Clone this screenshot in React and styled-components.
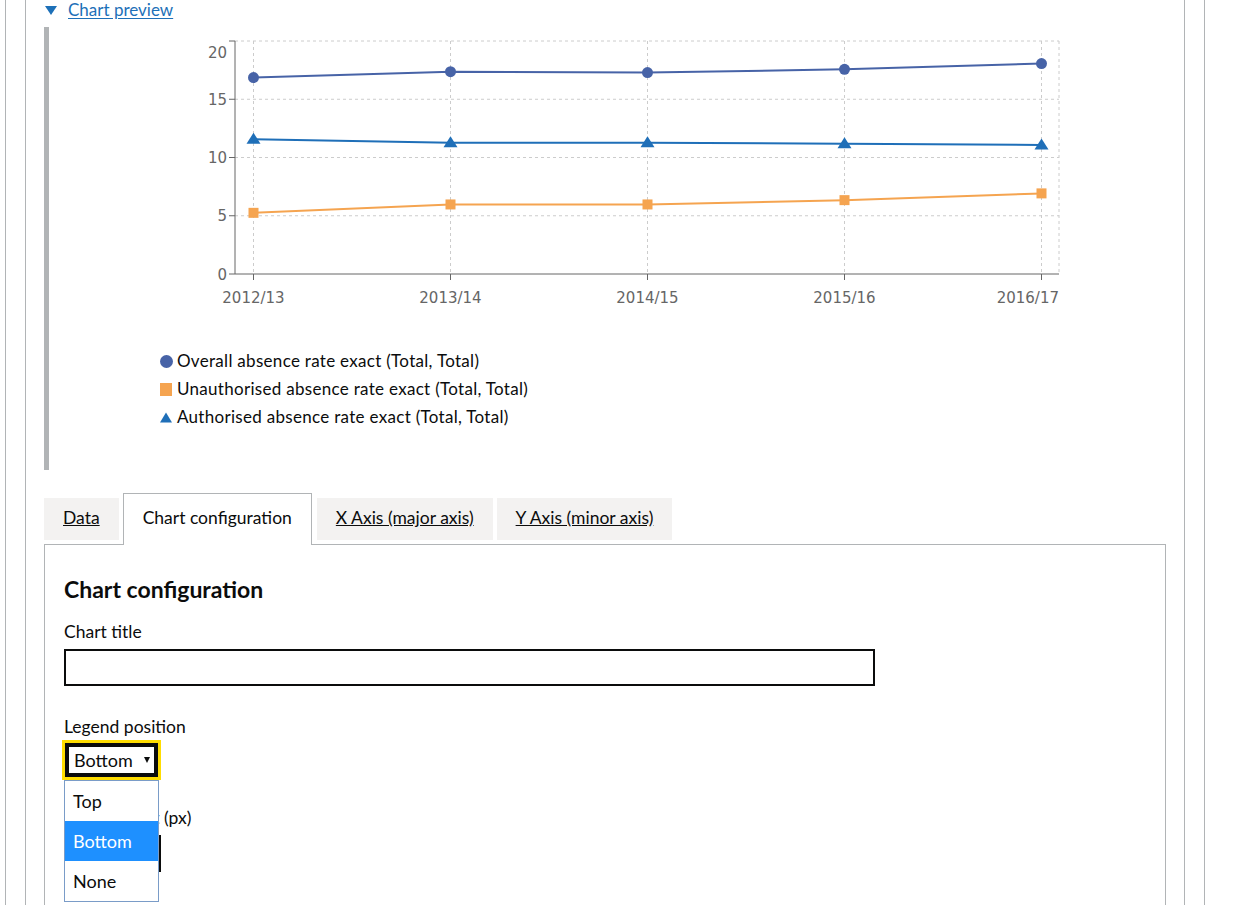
import styled, { createGlobalStyle } from 'styled-components';

const GlobalStyle = createGlobalStyle`
	body {
		margin: 0;
		background: #fff;
		color: #0b0c0c;
		font-family: Lato, 'Liberation Sans', sans-serif;
	}
`;

const years = ['2012/13', '2013/14', '2014/15', '2015/16', '2016/17'];

const series = [
	{ key: 'overall', label: 'Overall absence rate exact (Total, Total)', color: '#4763a7', shape: 'circle', values: [16.86, 17.37, 17.29, 17.57, 18.06] },
	{ key: 'unauthorised', label: 'Unauthorised absence rate exact (Total, Total)', color: '#f5a450', shape: 'square', values: [5.25, 5.97, 5.97, 6.34, 6.92] },
	{ key: 'authorised', label: 'Authorised absence rate exact (Total, Total)', color: '#1f6fb8', shape: 'triangle', values: [11.57, 11.27, 11.27, 11.19, 11.08] },
];

// plot box in page pixels (svg viewBox is offset to match)
const plot = { left: 235, right: 1059, top: 41, bottom: 274, firstX: 253.5, stepX: 197 };
const yOf = (v) => plot.bottom - v * ((plot.bottom - plot.top) / 20);
const xOf = (i) => plot.firstX + i * plot.stepX;

const Marker = ({ shape, color, x, y }) => {
	if (shape === 'circle') return <circle cx={x} cy={y} r={5.5} fill={color} />;
	if (shape === 'square') return <rect x={x - 5} y={y - 5} width={10} height={10} fill={color} />;
	return <polygon points={`${x},${y - 6.5} ${x + 7},${y + 4.5} ${x - 7},${y + 4.5}`} fill={color} />;
};

const Chart = () => (
	<ChartSvg width='1116' height='290' viewBox='49 27 1116 290'>
		<g stroke='#ccc' strokeDasharray='3 3' fill='none'>
			{[5, 10, 15, 20].map((v) => (
				<line key={v} x1={plot.left} x2={plot.right} y1={yOf(v)} y2={yOf(v)} />
			))}
			{years.map((y, i) => (
				<line key={y} x1={xOf(i)} x2={xOf(i)} y1={plot.top} y2={plot.bottom} />
			))}
			<line x1={plot.right} x2={plot.right} y1={plot.top} y2={plot.bottom} />
		</g>
		<g stroke='#666' fill='none'>
			<line x1={plot.left} x2={plot.left} y1={plot.top} y2={plot.bottom} />
			<line x1={plot.left} x2={plot.right} y1={plot.bottom} y2={plot.bottom} />
			{[0, 5, 10, 15, 20].map((v) => (
				<line key={v} x1={plot.left - 6} x2={plot.left} y1={yOf(v)} y2={yOf(v)} />
			))}
			{years.map((y, i) => (
				<line key={y} x1={xOf(i)} x2={xOf(i)} y1={plot.bottom} y2={plot.bottom + 6} />
			))}
		</g>
		<g fill='#666' fontFamily='DejaVu Sans, sans-serif' fontSize='15'>
			{[0, 5, 10, 15].map((v) => (
				<text key={v} x='227' y={yOf(v) + 5.5} textAnchor='end'>
					{v}
				</text>
			))}
			<text x='227' y='58' textAnchor='end'>
				20
			</text>
			{years.map((y, i) => (
				<text key={y} x={i === years.length - 1 ? plot.right : xOf(i)} y='302.5' textAnchor={i === years.length - 1 ? 'end' : 'middle'}>
					{y}
				</text>
			))}
		</g>
		{series.map((s) => (
			<g key={s.key}>
				<polyline points={s.values.map((v, i) => `${xOf(i)},${yOf(v)}`).join(' ')} fill='none' stroke={s.color} strokeWidth='2' />
				{s.values.map((v, i) => (
					<Marker key={i} shape={s.shape} color={s.color} x={xOf(i)} y={yOf(v)} />
				))}
			</g>
		))}
	</ChartSvg>
);

const LegendIcon = ({ shape, color }) => (
	<svg width='13' height='13' viewBox='0 0 13 13'>
		{shape === 'circle' && <circle cx='6.5' cy='6.5' r='6.5' fill={color} />}
		{shape === 'square' && <rect x='0' y='0' width='12' height='13' fill={color} />}
		{shape === 'triangle' && <polygon points='6,1.5 12,11.5 0,11.5' fill={color} />}
	</svg>
);

const tabs = ['Data', 'Chart configuration', 'X Axis (major axis)', 'Y Axis (minor axis)'];

const App = () => {
	return (
		<>
			<GlobalStyle />
			<Frame>
				<Inner>
					<Summary>
						<SummaryArrow />
						<SummaryLink>Chart preview</SummaryLink>
					</Summary>
					<DetailsBody>
						<Chart />
						<Legend>
							{series.map((s) => (
								<LegendItem key={s.key}>
									<LegendIcon shape={s.shape} color={s.color} />
									{s.label}
								</LegendItem>
							))}
						</Legend>
					</DetailsBody>

					<TabList>
						{tabs.map((t) => (
							<Tab key={t} $selected={t === 'Chart configuration'}>
								<TabLabel $selected={t === 'Chart configuration'}>{t}</TabLabel>
							</Tab>
						))}
					</TabList>
					<Panel>
						<Heading>Chart configuration</Heading>
						<FormGroup>
							<Label>Chart title</Label>
							<TextInput $width={811} />
						</FormGroup>
						<FormGroup>
							<Label $tight>Legend position</Label>
							<SelectBox>
								<span>Bottom</span>
								<SelectArrow />
								<Options>
									<Option>Top</Option>
									<Option $active>Bottom</Option>
									<Option>None</Option>
								</Options>
							</SelectBox>
						</FormGroup>
						<FormGroup>
							<Label>Chart height (px)</Label>
							<TextInput $width={97} />
						</FormGroup>
						<FormGroup>
							<Label>Chart width (px)</Label>
							<TextInput $width={97} />
						</FormGroup>
					</Panel>
				</Inner>
			</Frame>
		</>
	);
};

const Frame = styled.div`
	box-sizing: border-box;
	width: 1200px;
	min-height: 100vh;
	margin-left: 5px;
	padding: 0 19px;
	border-left: 1px solid #b1b4b6;
	border-right: 1px solid #b1b4b6;
`;

const Inner = styled.div`
	box-sizing: border-box;
	min-height: 100vh;
	padding: 0 18px;
	border-left: 1px solid #b1b4b6;
	border-right: 1px solid #b1b4b6;
`;

const Summary = styled.div`
	display: flex;
	align-items: center;
	gap: 11px;
	height: 20px;
	font-size: 17px;
	line-height: 20px;
	color: #1d70b8;
`;

const SummaryArrow = styled.span`
	width: 0;
	height: 0;
	margin-left: 1px;
	border-left: 6.5px solid transparent;
	border-right: 6.5px solid transparent;
	border-top: 9px solid #1d70b8;
`;

const SummaryLink = styled.a`
	color: #1d70b8;
	text-decoration: underline;
	text-underline-offset: 2px;
`;

const DetailsBody = styled.div`
	margin: 7px 0 23px;
	padding-bottom: 39px;
	border-left: 5px solid #b1b4b6;
`;

const ChartSvg = styled.svg`
	display: block;
`;

const Legend = styled.ul`
	margin: 30px 0 0;
	padding: 0 0 0 111px;
	list-style: none;
	font-size: 17px;
	letter-spacing: 0.3px;
	line-height: 28px;
`;

const LegendItem = styled.li`
	display: flex;
	align-items: center;
	gap: 4px;
`;

const TabList = styled.ul`
	position: relative;
	z-index: 1;
	display: flex;
	align-items: flex-start;
	margin: 0;
	padding: 0;
	list-style: none;
`;

const Tab = styled.li`
	margin-top: ${({ $selected }) => ($selected ? '0' : '5px')};
	margin-right: ${({ $selected }) => ($selected ? '5px' : '4px')};
	padding: ${({ $selected }) => ($selected ? '13px 19px 16px' : '9px 19px 11px')};
	border: ${({ $selected }) => ($selected ? '1px solid #b1b4b6' : '0')};
	border-bottom: 0;
	background: ${({ $selected }) => ($selected ? '#fff' : '#f3f2f1')};
	font-size: 17.5px;
	line-height: 22px;
`;

const TabLabel = styled.a`
	color: #0b0c0c;
	text-decoration: ${({ $selected }) => ($selected ? 'none' : 'underline')};
`;

const Panel = styled.div`
	margin-top: -1px;
	padding: 30px 19px 60px;
	border: 1px solid #b1b4b6;
`;

const Heading = styled.h2`
	margin: 0 0 16px;
	font-size: 23px;
	line-height: 28px;
	font-weight: 700;
`;

const FormGroup = styled.div`
	margin-bottom: 28px;
`;

const Label = styled.label`
	display: block;
	margin-bottom: ${({ $tight }) => ($tight ? '4px' : '5px')};
	font-size: 17.5px;
	line-height: 25px;
`;

const TextInput = styled.input`
	display: block;
	box-sizing: border-box;
	width: ${({ $width }) => $width}px;
	height: 37px;
	padding: 5px;
	border: 2px solid #0b0c0c;
	border-radius: 0;
	font: inherit;
	font-size: 18px;
`;

const SelectBox = styled.div`
	position: relative;
	display: flex;
	align-items: center;
	justify-content: space-between;
	box-sizing: border-box;
	width: 93px;
	height: 34px;
	margin-left: 1px;
	padding: 0 6px 0 7px;
	border: 2px solid #0b0c0c;
	box-shadow: inset 0 0 0 2px #0b0c0c;
	outline: 3px solid #ffdd00;
	font-size: 18px;
	line-height: 22px;
`;

const SelectArrow = styled.span`
	width: 0;
	height: 0;
	border-left: 3.5px solid transparent;
	border-right: 3.5px solid transparent;
	border-top: 6px solid #0b0c0c;
`;

const Options = styled.ul`
	position: absolute;
	z-index: 2;
	top: 35px;
	left: -3px;
	box-sizing: border-box;
	width: 95px;
	margin: 0;
	padding: 0;
	list-style: none;
	background: #fff;
	border: 1px solid #7a9cc8;
`;

const Option = styled.li`
	height: 40px;
	padding-left: 8px;
	font-size: 18px;
	line-height: 40px;
	color: ${({ $active }) => ($active ? '#fff' : '#0b0c0c')};
	background: ${({ $active }) => ($active ? '#1e90ff' : '#fff')};
`;

export default App;
